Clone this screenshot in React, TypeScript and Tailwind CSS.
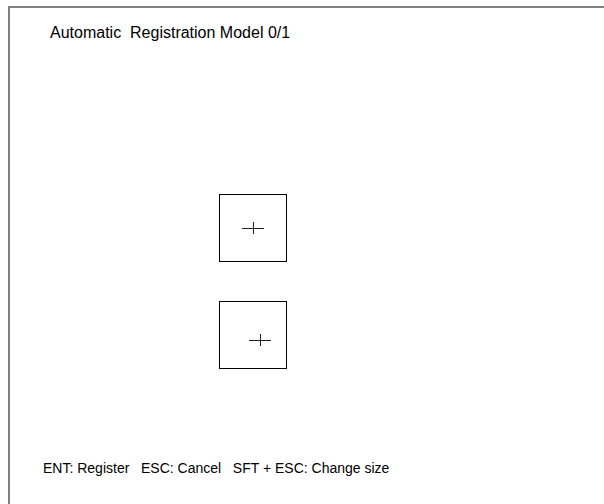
const font = { fontFamily: '"Liberation Sans", Arial, sans-serif' }

function TargetBox({ cx, cy }: { cx: number; cy: number }) {
  // cx, cy: crosshair center inside the box (px, border-box coords)
  return (
    <div className="w-[68px] h-[68px] border border-black bg-white">
      <svg width="66" height="66" className="block">
        <line x1={cx - 11 - 1} y1={cy - 1 + 0.5} x2={cx + 11 - 1} y2={cy - 1 + 0.5} stroke="#222" strokeWidth="1" />
        <line x1={cx - 1 + 0.5} y1={cy - 6 - 1} x2={cx - 1 + 0.5} y2={cy + 6 - 1} stroke="#222" strokeWidth="1" />
      </svg>
    </div>
  )
}

export default function App() {
  return (
    <div className="w-[604px] h-[504px] bg-white pt-[6px] pl-[8px] overflow-hidden" style={font}>
      <div className="h-full border-t-2 border-l-2 border-[#808080] flex flex-col text-black">
        {/* 헤더 */}
        <div className="pt-[16px] pl-[40px] whitespace-pre text-[16px] leading-[18px]">Automatic  Registration Model 0/1</div>

        {/* 타겟 */}
        <div className="pl-[209px] pt-[152px] flex flex-col gap-[39px]">
          <TargetBox cx={34} cy={34} />
          <TargetBox cx={41} cy={39} />
        </div>

        {/* 하단 안내 */}
        <div className="pl-[33px] pt-[91px] whitespace-pre text-[14px] leading-[16px]">ENT: Register   ESC: Cancel   SFT + ESC: Change size</div>
      </div>
    </div>
  )
}
